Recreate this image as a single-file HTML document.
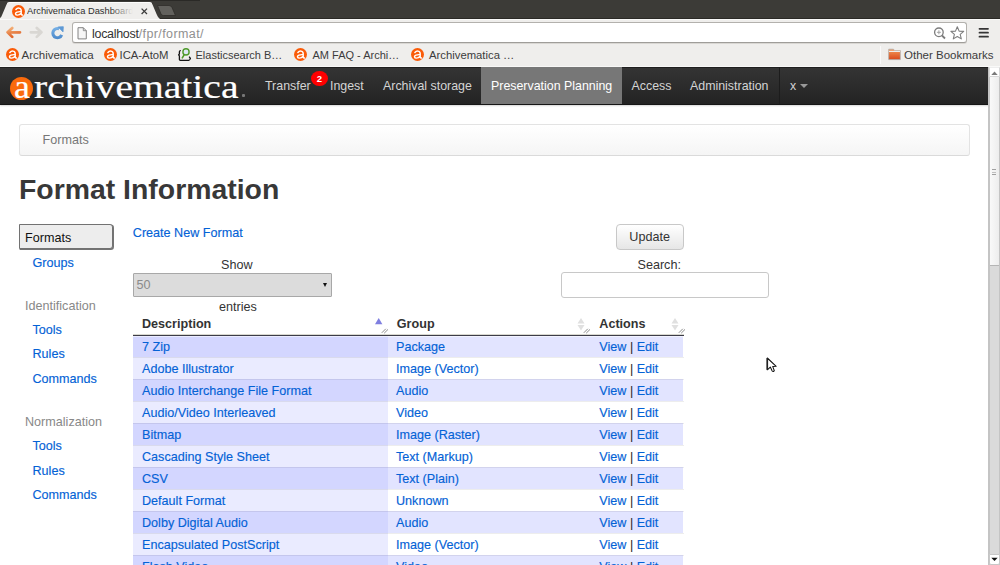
<!DOCTYPE html>
<html><head><meta charset="utf-8">
<style>
*{box-sizing:border-box;margin:0;padding:0}
html,body{width:1000px;height:565px;overflow:hidden;background:#fff;font-family:"Liberation Sans",sans-serif}
.abs{position:absolute}
#tabstrip{left:0;top:0;width:1000px;height:19px;background:#3c3b37;border-bottom:1px solid #2b2a26}
#toolbar{left:0;top:19px;width:1000px;height:48px;background:#efeeec;border-top:1px solid #fafaf9;border-bottom:1px solid #e6e5e3}
#omni{left:72px;top:22.2px;width:894.5px;height:20.8px;background:#fff;border:1px solid #b3b1ad;border-bottom-color:#9f9d99;border-radius:3px;box-shadow:0 1px 0 #d9d7d3}
.ubt{font-size:11.5px;color:#3c3c3c;white-space:nowrap;line-height:16px}
.fav{width:12.5px;height:12.5px;border-radius:50%;background:#f35b0e}
#nav{left:0;top:67px;width:988.5px;height:37.5px;background:linear-gradient(#343434,#232323);border-top:1px solid #1f1f1f;border-bottom:1px solid #161616;box-shadow:0 1px 1.5px rgba(0,0,0,0.16)}
.logo{font-family:"Liberation Serif",serif;font-size:34px;line-height:34px;color:#fff;white-space:nowrap;-webkit-text-stroke:0.2px #fff}
.t{font-size:12.6px;line-height:16px;white-space:nowrap;color:#333}
a{color:#0462d6;text-decoration:none;-webkit-text-stroke:0.15px #0462d6}
#bc{left:19px;top:124px;width:951px;height:32px;background:linear-gradient(#fff,#f5f5f5);border:1px solid #e3e3e3;border-bottom-color:#dadada;border-radius:3px}
.h1{font-size:28.4px;line-height:34px;font-weight:bold;color:#383838;white-space:nowrap}
#fbtn{left:19px;top:224px;width:94px;height:25px;background:#ededed;border:1px solid #727272;border-radius:0 3px 3px 0;box-shadow:0.8px 0.8px 0 0.2px rgba(70,70,70,0.75)}
#upd{left:615.5px;top:224px;width:68px;height:26px;background:linear-gradient(#fff,#e6e6e6);border:1px solid #c8c8c8;border-radius:4px}
#sel{left:133px;top:272.5px;width:199px;height:24.5px;background:#dcdcdc;border:1px solid #a8a8a8;border-radius:1px}
#srch{left:561px;top:272px;width:207.5px;height:26px;background:#fff;border:1px solid #c8c8c8;border-radius:3px}
</style></head><body>
<div id="tabstrip" class="abs"></div>
<svg class="abs" style="left:0;top:0" width="200" height="21">
  <rect x="0" y="0" width="200" height="1" fill="#2a2926"/>
  <path d="M-1 20 L0 18 Q1.5 17 2.5 14 L6.5 4.5 Q7.5 2 10 2 L149 2 Q151.5 2 152.5 4.5 L156.5 14 Q157.5 17 160 19 L162 20 Z" fill="#efeeec"/>
  <path d="M7 3.5 Q8 2.5 10 2.5 L149 2.5 Q151 2.5 152 3.5" stroke="#fdfdfc" stroke-width="1" fill="none"/>
  <path d="M157.5 5.5 L169 5.5 Q171 5.5 172 7.5 L175.5 15.5 L163.5 15.5 Q161.5 15.5 161 14 Z" fill="#62615d" stroke="#2e2d2a" stroke-width="0.8"/>
</svg>
<svg class="abs" style="left:11.7px;top:4.8px" width="13" height="13"><circle cx="6.5" cy="6.5" r="6.5" fill="#fa5b08"/><path d="M3.9 4.5 Q5.2 3 6.9 3.1 Q9.2 3.3 9.2 5.7 L9.2 9.5 M9.1 6.7 Q6.6 6.5 4.9 7.1 Q3.4 7.7 3.5 8.8 Q3.7 10.1 5.4 10.1 Q7.6 10 9.1 8.1 M9.2 9.3 Q9.5 10.1 10.5 10" stroke="#fff" stroke-width="1.45" fill="none" stroke-linecap="round"/></svg>
<div class="abs" style="left:27px;top:4px;width:107px;height:14px;overflow:hidden"><div class="ubt" style="font-size:9.3px;line-height:14px;color:#2e2e2e">Archivematica Dashboard</div></div><div class="abs" style="left:110px;top:4px;width:25px;height:14px;background:linear-gradient(90deg,rgba(239,238,236,0),#efeeec 92%)"></div>
<svg class="abs" style="left:140px;top:7px" width="9" height="9"><path d="M1.6 1.6 L7 7 M7 1.6 L1.6 7" stroke="#3c3c3c" stroke-width="1.3"/></svg>
<div id="toolbar" class="abs"></div>
<!-- back / forward / reload -->
<svg class="abs" style="left:5px;top:26px" width="18" height="14"><defs><linearGradient id="gb" x1="0" y1="0" x2="0.3" y2="1"><stop offset="0" stop-color="#f4b27a"/><stop offset="1" stop-color="#e0662a"/></linearGradient></defs><path d="M2.6 6.3 L15 6.3 M7.2 1.9 L2.6 6.3 L7.2 10.9" stroke="url(#gb)" stroke-width="2.7" fill="none" stroke-linecap="round" stroke-linejoin="round"/></svg>
<svg class="abs" style="left:28px;top:26px" width="18" height="14"><path d="M13.4 6.3 L2.8 6.3 M8.8 1.9 L13.4 6.3 L8.8 10.9" stroke="#d9d7d3" stroke-width="2.7" fill="none" stroke-linecap="round" stroke-linejoin="round"/></svg>
<svg class="abs" style="left:50px;top:26px" width="16" height="15"><defs><linearGradient id="gr" x1="0" y1="0" x2="0" y2="1"><stop offset="0" stop-color="#74aee4"/><stop offset="1" stop-color="#4f8ccc"/></linearGradient></defs><path d="M11.7 8.9 A4.6 4.6 0 1 1 9.2 2.9" stroke="url(#gr)" stroke-width="3.1" fill="none"/><path d="M8.2 0.9 L13.3 0.7 L13 5.9 Z" fill="#5f9ad6" stroke="#5f9ad6" stroke-width="0.8" stroke-linejoin="round"/></svg>
<div id="omni" class="abs"></div>
<svg class="abs" style="left:77px;top:26.5px" width="12" height="13"><path d="M1 0.7 L6.3 0.7 L9.3 3.7 L9.3 11.9 L1 11.9 Z" fill="#f6f6f6" stroke="#777" stroke-width="0.9"/><path d="M6.3 0.7 L6.3 3.7 L9.3 3.7" fill="none" stroke="#777" stroke-width="0.8"/></svg>
<div class="abs ubt" style="left:92px;top:25.5px;font-size:12.5px;color:#333;letter-spacing:-0.3px">localhost<span style="color:#909090;letter-spacing:0.4px">/fpr/format/</span></div>
<svg class="abs" style="left:932px;top:26px" width="15" height="15"><circle cx="6.9" cy="6.3" r="4.3" fill="none" stroke="#7c7c7c" stroke-width="1.3"/><path d="M10 9.5 L13 12.5" stroke="#7c7c7c" stroke-width="1.8"/><path d="M6.9 4.3 L6.9 8.3 M4.9 6.3 L8.9 6.3" stroke="#9a9a9a" stroke-width="0.9"/></svg>
<svg class="abs" style="left:950px;top:26px" width="15" height="15"><path d="M7.3 0.8 L9.1 5.1 L13.7 5.4 L10.2 8.4 L11.3 12.9 L7.3 10.5 L3.3 12.9 L4.4 8.4 L0.9 5.4 L5.5 5.1 Z" fill="#fff" stroke="#7e7e7e" stroke-width="1.1" stroke-linejoin="round"/></svg>
<svg class="abs" style="left:977px;top:26px" width="13" height="13"><path d="M2.5 2.8 L11 2.8 M2.5 6.7 L11 6.7 M2.5 10.7 L11 10.7" stroke="#353535" stroke-width="1.8" stroke-linecap="round"/></svg>
<!-- bookmarks -->
<svg class="abs" style="left:6px;top:47.8px" width="13" height="13"><circle cx="6.5" cy="6.5" r="6.5" fill="#fa5b08"/><path d="M3.9 4.5 Q5.2 3 6.9 3.1 Q9.2 3.3 9.2 5.7 L9.2 9.5 M9.1 6.7 Q6.6 6.5 4.9 7.1 Q3.4 7.7 3.5 8.8 Q3.7 10.1 5.4 10.1 Q7.6 10 9.1 8.1 M9.2 9.3 Q9.5 10.1 10.5 10" stroke="#fff" stroke-width="1.45" fill="none" stroke-linecap="round"/></svg>
<div class="abs ubt" style="left:21.5px;top:47px">Archivematica</div>
<svg class="abs" style="left:104px;top:47.8px" width="13" height="13"><circle cx="6.5" cy="6.5" r="6.5" fill="#fa5b08"/><path d="M3.9 4.5 Q5.2 3 6.9 3.1 Q9.2 3.3 9.2 5.7 L9.2 9.5 M9.1 6.7 Q6.6 6.5 4.9 7.1 Q3.4 7.7 3.5 8.8 Q3.7 10.1 5.4 10.1 Q7.6 10 9.1 8.1 M9.2 9.3 Q9.5 10.1 10.5 10" stroke="#fff" stroke-width="1.45" fill="none" stroke-linecap="round"/></svg>
<div class="abs ubt" style="left:119.5px;top:47px;font-size:11.3px">ICA-AtoM</div>
<svg class="abs" style="left:174px;top:45px" width="22" height="20"><path d="M6.8 5.6 Q5.4 5.5 5.4 7 L5.4 8.6 Q5.4 9.6 4.6 9.9 Q5.4 10.2 5.4 11.2 L5.4 14.5 Q5.4 15.3 6.3 15.3 L14.8 15.3 Q15.3 15.3 15.8 14.5 L16.4 13.4 L15.1 11.6" fill="none" stroke="#141414" stroke-width="1.3" stroke-linejoin="round"/><circle cx="12" cy="6.9" r="3.1" fill="#dde8f5" stroke="#4f9a2a" stroke-width="1.4"/><path d="M10.1 9.8 L8.3 12.8" stroke="#4f9a2a" stroke-width="1.6" stroke-linecap="round"/></svg>
<div class="abs ubt" style="left:195.5px;top:47px;font-size:11px">Elasticsearch B…</div>
<svg class="abs" style="left:294px;top:47.8px" width="13" height="13"><circle cx="6.5" cy="6.5" r="6.5" fill="#fa5b08"/><path d="M3.9 4.5 Q5.2 3 6.9 3.1 Q9.2 3.3 9.2 5.7 L9.2 9.5 M9.1 6.7 Q6.6 6.5 4.9 7.1 Q3.4 7.7 3.5 8.8 Q3.7 10.1 5.4 10.1 Q7.6 10 9.1 8.1 M9.2 9.3 Q9.5 10.1 10.5 10" stroke="#fff" stroke-width="1.45" fill="none" stroke-linecap="round"/></svg>
<div class="abs ubt" style="left:312.5px;top:47px;font-size:11px">AM FAQ - Archi…</div>
<svg class="abs" style="left:410.5px;top:47.8px" width="13" height="13"><circle cx="6.5" cy="6.5" r="6.5" fill="#fa5b08"/><path d="M3.9 4.5 Q5.2 3 6.9 3.1 Q9.2 3.3 9.2 5.7 L9.2 9.5 M9.1 6.7 Q6.6 6.5 4.9 7.1 Q3.4 7.7 3.5 8.8 Q3.7 10.1 5.4 10.1 Q7.6 10 9.1 8.1 M9.2 9.3 Q9.5 10.1 10.5 10" stroke="#fff" stroke-width="1.45" fill="none" stroke-linecap="round"/></svg>
<div class="abs ubt" style="left:429px;top:47px;font-size:11.3px">Archivematica …</div>
<div class="abs" style="left:0;top:66px;width:1000px;height:1px;background:#f9f9f8"></div>
<div class="abs" style="left:880px;top:46px;width:1px;height:17.5px;background:#d6d4d0;border-right:1px solid #fafafa"></div>
<svg class="abs" style="left:888px;top:48px" width="14" height="13"><defs><linearGradient id="gf" x1="0" y1="0" x2="0" y2="1"><stop offset="0" stop-color="#f59a5a"/><stop offset="1" stop-color="#d9481a"/></linearGradient></defs><path d="M0.7 1.2 L5.5 1.2 L6.5 2.5 L12.3 2.5 L12.3 11.6 L0.7 11.6 Z" fill="url(#gf)" stroke="#a9a9a9" stroke-width="0.7"/><rect x="1" y="2.8" width="11" height="1.2" fill="#eee"/></svg>
<div class="abs ubt" style="left:904px;top:47px">Other Bookmarks</div>
<div class="abs" id="nav"></div>
<div class="abs" style="left:481px;top:67px;width:140.5px;height:37px;background:#777"></div>
<div class="abs" style="left:779px;top:67px;width:1px;height:37px;background:#4a4a4a;border-right:1px solid #1c1c1c"></div>
<div class="abs" style="left:9.8px;top:76.6px;width:23px;height:23px;border-radius:50%;background:#fa6a0c"></div>
<div class="abs logo" style="left:14px;top:69.5px;transform-origin:0 0;transform:scaleX(1.05)">a</div>
<div class="abs logo" style="left:34px;top:69.5px;transform-origin:0 0;transform:scaleX(1.165)">rchivematica</div>
<div class="abs" style="left:242px;top:94px;width:3px;height:3px;background:#777;border-radius:1px"></div>
<div class="abs t nv" style="left:265px;top:77.7px;color:#d4d4d4;font-size:12.4px">Transfer</div>
<div class="abs t nv" style="left:330px;top:77.7px;color:#d4d4d4;font-size:12.4px">Ingest</div>
<div class="abs t nv" style="left:383px;top:77.7px;color:#d4d4d4;font-size:12.4px">Archival storage</div>
<div class="abs t nv" style="left:491px;top:77.7px;color:#fff;font-size:12.4px">Preservation Planning</div>
<div class="abs t nv" style="left:631.5px;top:77.7px;color:#d4d4d4;font-size:12.4px">Access</div>
<div class="abs t nv" style="left:690px;top:77.7px;color:#d4d4d4;font-size:12.4px">Administration</div>
<div class="abs t nv" style="left:790px;top:77.7px;color:#d4d4d4;font-size:12.4px">x</div>
<div class="abs" style="left:310.5px;top:70.5px;width:17.2px;height:15.6px;border-radius:50%;background:#f00;color:#fff;font-weight:bold;font-size:9.5px;line-height:16.6px;text-align:center;padding-left:0.5px">2</div>
<div class="abs" style="left:800px;top:84px;width:0;height:0;border-left:4px solid transparent;border-right:4px solid transparent;border-top:4px solid #999"></div>
<div class="abs" id="bc"></div>
<div class="abs t" style="left:42.5px;top:132.2px;color:#777">Formats</div>
<div class="abs h1" style="left:19px;top:172.1px">Format Information</div>
<div class="abs" id="fbtn"></div>
<div class="abs t" style="left:25px;top:229.6px;color:#111">Formats</div>
<div class="abs t" style="left:32.5px;top:254.8px;"><a>Groups</a></div>
<div class="abs t" style="left:25px;top:298.0px;color:#888">Identification</div>
<div class="abs t" style="left:32.5px;top:321.9px;"><a>Tools</a></div>
<div class="abs t" style="left:32.5px;top:346.3px;"><a>Rules</a></div>
<div class="abs t" style="left:32.5px;top:370.6px;"><a>Commands</a></div>
<div class="abs t" style="left:25px;top:414.3px;color:#888">Normalization</div>
<div class="abs t" style="left:32.5px;top:438.2px;"><a>Tools</a></div>
<div class="abs t" style="left:32.5px;top:462.6px;"><a>Rules</a></div>
<div class="abs t" style="left:32.5px;top:486.9px;"><a>Commands</a></div>
<div class="abs t" style="left:132.8px;top:225.2px;"><a>Create New Format</a></div>
<div class="abs" id="upd"></div>
<div class="abs t" style="left:629.3px;top:228.7px;color:#333">Update</div>
<div class="abs t" style="left:221px;top:256.8px;color:#333">Show</div>
<div class="abs t" style="left:637.5px;top:256.8px;color:#333">Search:</div>
<div class="abs" id="sel"></div>
<div class="abs t" style="left:136.5px;top:276.6px;color:#8a8a8a">50</div>
<div class="abs" style="left:323px;top:282.5px;width:0;height:0;border-left:2.5px solid transparent;border-right:2.5px solid transparent;border-top:4px solid #111"></div>
<div class="abs t" style="left:219px;top:299.0px;color:#333">entries</div>
<div class="abs" id="srch"></div>
<div class="abs t" style="left:142px;top:316.0px;font-weight:bold;color:#333">Description</div>
<div class="abs t" style="left:396.8px;top:316.0px;font-weight:bold;color:#333">Group</div>
<div class="abs t" style="left:599.3px;top:316.0px;font-weight:bold;color:#333">Actions</div>
<svg class="abs" style="left:374px;top:316px" width="10" height="10"><path d="M1 8.2 L4.7 2 L8.4 8.2Z" fill="#7f7fe0"/></svg>
<svg class="abs" style="left:577px;top:317px" width="9" height="15"><path d="M0.5 6.5 L4 1 L7.5 6.5Z M0.5 8 L4 13.5 L7.5 8Z" fill="#e0e0e0"/></svg>
<svg class="abs" style="left:671.2px;top:317px" width="9" height="15"><path d="M0.5 6.5 L4 1 L7.5 6.5Z M0.5 8 L4 13.5 L7.5 8Z" fill="#e0e0e0"/></svg>
<svg class="abs" style="left:381px;top:327px" width="7" height="7"><path d="M0.8 5.8 L4.8 1.8 M3.2 6.2 L7 2.4" stroke="#808080" stroke-width="0.9"/></svg>
<svg class="abs" style="left:582.5px;top:327px" width="7" height="7"><path d="M0.8 5.8 L4.8 1.8 M3.2 6.2 L7 2.4" stroke="#808080" stroke-width="0.9"/></svg>
<svg class="abs" style="left:678px;top:327px" width="7" height="7"><path d="M0.8 5.8 L4.8 1.8 M3.2 6.2 L7 2.4" stroke="#808080" stroke-width="0.9"/></svg>
<div class="abs" style="left:133px;top:335px;width:254.6px;height:22px;background:#d3d6ff"></div>
<div class="abs" style="left:387.6px;top:335px;width:295.9px;height:22px;background:#e2e4ff"></div>
<div class="abs t" style="left:142px;top:338.8px;"><a>7 Zip</a></div>
<div class="abs t" style="left:396px;top:338.8px;"><a>Package</a></div>
<div class="abs t" style="left:599.3px;top:338.8px;"><a>View</a> <span style="color:#222">|</span> <a>Edit</a></div>
<div class="abs" style="left:133px;top:357px;width:254.6px;height:22px;background:#eaebff"></div>
<div class="abs" style="left:387.6px;top:357px;width:295.9px;height:22px;background:#ffffff"></div>
<div class="abs" style="left:133px;top:357px;width:550.5px;height:1px;background:rgba(0,0,0,0.07)"></div>
<div class="abs t" style="left:142px;top:360.8px;"><a>Adobe Illustrator</a></div>
<div class="abs t" style="left:396px;top:360.8px;"><a>Image (Vector)</a></div>
<div class="abs t" style="left:599.3px;top:360.8px;"><a>View</a> <span style="color:#222">|</span> <a>Edit</a></div>
<div class="abs" style="left:133px;top:379px;width:254.6px;height:22px;background:#d3d6ff"></div>
<div class="abs" style="left:387.6px;top:379px;width:295.9px;height:22px;background:#e2e4ff"></div>
<div class="abs" style="left:133px;top:379px;width:550.5px;height:1px;background:rgba(0,0,0,0.07)"></div>
<div class="abs t" style="left:142px;top:382.8px;"><a>Audio Interchange File Format</a></div>
<div class="abs t" style="left:396px;top:382.8px;"><a>Audio</a></div>
<div class="abs t" style="left:599.3px;top:382.8px;"><a>View</a> <span style="color:#222">|</span> <a>Edit</a></div>
<div class="abs" style="left:133px;top:401px;width:254.6px;height:22px;background:#eaebff"></div>
<div class="abs" style="left:387.6px;top:401px;width:295.9px;height:22px;background:#ffffff"></div>
<div class="abs" style="left:133px;top:401px;width:550.5px;height:1px;background:rgba(0,0,0,0.07)"></div>
<div class="abs t" style="left:142px;top:404.8px;"><a>Audio/Video Interleaved</a></div>
<div class="abs t" style="left:396px;top:404.8px;"><a>Video</a></div>
<div class="abs t" style="left:599.3px;top:404.8px;"><a>View</a> <span style="color:#222">|</span> <a>Edit</a></div>
<div class="abs" style="left:133px;top:423px;width:254.6px;height:22px;background:#d3d6ff"></div>
<div class="abs" style="left:387.6px;top:423px;width:295.9px;height:22px;background:#e2e4ff"></div>
<div class="abs" style="left:133px;top:423px;width:550.5px;height:1px;background:rgba(0,0,0,0.07)"></div>
<div class="abs t" style="left:142px;top:426.8px;"><a>Bitmap</a></div>
<div class="abs t" style="left:396px;top:426.8px;"><a>Image (Raster)</a></div>
<div class="abs t" style="left:599.3px;top:426.8px;"><a>View</a> <span style="color:#222">|</span> <a>Edit</a></div>
<div class="abs" style="left:133px;top:445px;width:254.6px;height:22px;background:#eaebff"></div>
<div class="abs" style="left:387.6px;top:445px;width:295.9px;height:22px;background:#ffffff"></div>
<div class="abs" style="left:133px;top:445px;width:550.5px;height:1px;background:rgba(0,0,0,0.07)"></div>
<div class="abs t" style="left:142px;top:448.8px;"><a>Cascading Style Sheet</a></div>
<div class="abs t" style="left:396px;top:448.8px;"><a>Text (Markup)</a></div>
<div class="abs t" style="left:599.3px;top:448.8px;"><a>View</a> <span style="color:#222">|</span> <a>Edit</a></div>
<div class="abs" style="left:133px;top:467px;width:254.6px;height:22px;background:#d3d6ff"></div>
<div class="abs" style="left:387.6px;top:467px;width:295.9px;height:22px;background:#e2e4ff"></div>
<div class="abs" style="left:133px;top:467px;width:550.5px;height:1px;background:rgba(0,0,0,0.07)"></div>
<div class="abs t" style="left:142px;top:470.8px;"><a>CSV</a></div>
<div class="abs t" style="left:396px;top:470.8px;"><a>Text (Plain)</a></div>
<div class="abs t" style="left:599.3px;top:470.8px;"><a>View</a> <span style="color:#222">|</span> <a>Edit</a></div>
<div class="abs" style="left:133px;top:489px;width:254.6px;height:22px;background:#eaebff"></div>
<div class="abs" style="left:387.6px;top:489px;width:295.9px;height:22px;background:#ffffff"></div>
<div class="abs" style="left:133px;top:489px;width:550.5px;height:1px;background:rgba(0,0,0,0.07)"></div>
<div class="abs t" style="left:142px;top:492.8px;"><a>Default Format</a></div>
<div class="abs t" style="left:396px;top:492.8px;"><a>Unknown</a></div>
<div class="abs t" style="left:599.3px;top:492.8px;"><a>View</a> <span style="color:#222">|</span> <a>Edit</a></div>
<div class="abs" style="left:133px;top:511px;width:254.6px;height:22px;background:#d3d6ff"></div>
<div class="abs" style="left:387.6px;top:511px;width:295.9px;height:22px;background:#e2e4ff"></div>
<div class="abs" style="left:133px;top:511px;width:550.5px;height:1px;background:rgba(0,0,0,0.07)"></div>
<div class="abs t" style="left:142px;top:514.8px;"><a>Dolby Digital Audio</a></div>
<div class="abs t" style="left:396px;top:514.8px;"><a>Audio</a></div>
<div class="abs t" style="left:599.3px;top:514.8px;"><a>View</a> <span style="color:#222">|</span> <a>Edit</a></div>
<div class="abs" style="left:133px;top:533px;width:254.6px;height:22px;background:#eaebff"></div>
<div class="abs" style="left:387.6px;top:533px;width:295.9px;height:22px;background:#ffffff"></div>
<div class="abs" style="left:133px;top:533px;width:550.5px;height:1px;background:rgba(0,0,0,0.07)"></div>
<div class="abs t" style="left:142px;top:536.8px;"><a>Encapsulated PostScript</a></div>
<div class="abs t" style="left:396px;top:536.8px;"><a>Image (Vector)</a></div>
<div class="abs t" style="left:599.3px;top:536.8px;"><a>View</a> <span style="color:#222">|</span> <a>Edit</a></div>
<div class="abs" style="left:133px;top:555px;width:254.6px;height:22px;background:#d3d6ff"></div>
<div class="abs" style="left:387.6px;top:555px;width:295.9px;height:22px;background:#e2e4ff"></div>
<div class="abs" style="left:133px;top:555px;width:550.5px;height:1px;background:rgba(0,0,0,0.07)"></div>
<div class="abs t" style="left:142px;top:558.8px;"><a>Flash Video</a></div>
<div class="abs t" style="left:396px;top:558.8px;"><a>Video</a></div>
<div class="abs t" style="left:599.3px;top:558.8px;"><a>View</a> <span style="color:#222">|</span> <a>Edit</a></div>
<div class="abs" style="left:133px;top:334px;width:550.5px;height:1px;background:#d8d8d0"></div><div class="abs" style="left:133px;top:335px;width:550.5px;height:1px;background:#3c3c48"></div><div class="abs" style="left:133px;top:336px;width:550.5px;height:1px;background:rgba(255,255,255,0.55)"></div>
<svg class="abs" style="left:766px;top:356px" width="14" height="20"><path d="M1.3 2 L1.3 13.8 L4.3 11.1 L6.2 15 Q6.9 15.9 7.8 15.3 L8.3 14.6 L6.7 10.4 L10.2 10.3 Z" fill="#fff" stroke="#111" stroke-width="1.05" stroke-linejoin="round"/><path d="M1.3 2 L1.3 13.8" stroke="#222" stroke-width="1.6"/></svg>
<div class="abs" style="left:988px;top:67px;width:12px;height:498px;background:#dadada;border-left:2px solid #c4c4c4;border-right:1.2px solid #c4c4c4"></div>
<div class="abs" style="left:990px;top:77px;width:8.8px;height:189px;background:linear-gradient(90deg,#f9f9f9,#ededed);border-bottom:1px solid #b5b5b5"></div>
<div class="abs" style="left:992px;top:168.8px;width:4px;height:1px;background:#a0a0a0"></div>
<div class="abs" style="left:992px;top:171.5px;width:4px;height:1px;background:#c0c0c0"></div>
<div class="abs" style="left:992px;top:174px;width:4px;height:1px;background:#a0a0a0"></div>
<div class="abs" style="left:989px;top:67px;width:10.8px;height:10px;background:#fff;border:1px solid #d8d8d8;border-top-color:#eee"></div>
<svg class="abs" style="left:990px;top:70px" width="9" height="6"><path d="M1.3 5 L4.5 1.6 L7.7 5Z" fill="#7a7a7a"/></svg>
<div class="abs" style="left:989px;top:553.5px;width:10.8px;height:11.5px;background:#fff;border:1px solid #c8c8c8;border-radius:0 0 2px 2px"></div>
<svg class="abs" style="left:990px;top:556px" width="9" height="6"><path d="M1.3 1.8 L4.5 5 L7.7 1.8Z" fill="#111"/></svg>
</body></html>
